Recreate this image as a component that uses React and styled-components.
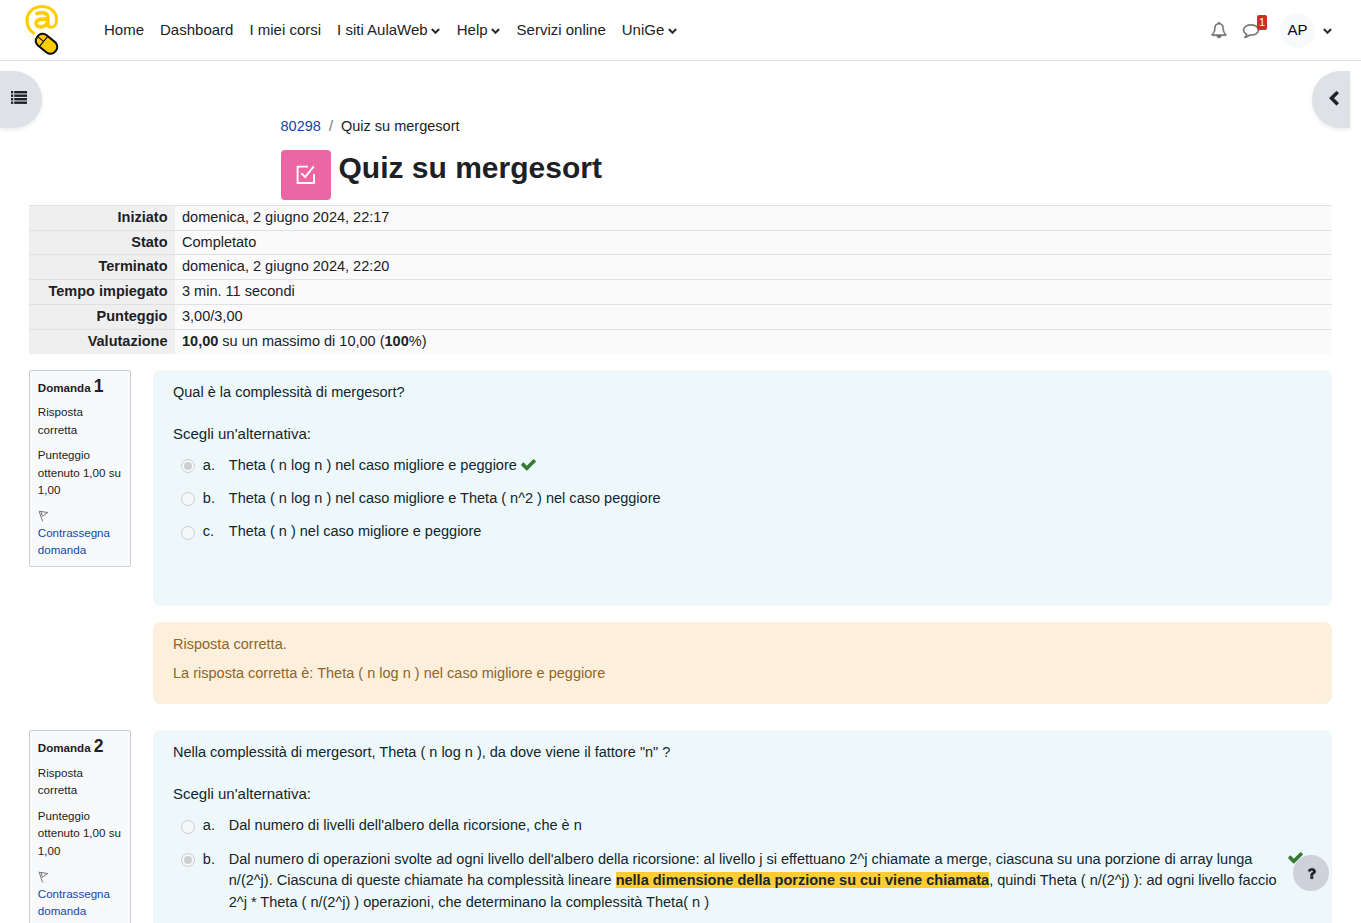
import React from "react";
import styled, { createGlobalStyle, css } from "styled-components";

const Global = createGlobalStyle`
  *, *::before, *::after { box-sizing: border-box; }
  html { overflow: hidden; }
  body {
    margin: 0;
    background: #fff;
    color: #1d2125;
    font-family: "Liberation Sans", Arial, sans-serif;
    font-size: 14.53px;
    line-height: 1.5;
  }
  p { margin: 0; }
`;

const Page = styled.div`
  height: 923px;
  overflow: hidden;
`;

const Link = styled.a`
  color: #0f47ad;
  text-decoration: none;
`;

/* ---------- icons ---------- */

const Glyph = styled.svg`
  display: block;
  flex: none;
  width: ${(p) => p.$size || 16}px;
  height: ${(p) => p.$size || 16}px;
  fill: ${(p) => p.$color || "currentColor"};
  stroke: ${(p) => p.$color || "currentColor"};
  stroke-width: ${(p) => p.$weight || 0};
  overflow: visible;
`;

const PATHS = {
  bell: "M912 1696q0-16-16-16-59 0-101.5-42.5t-42.5-101.5q0-16-16-16t-16 16q0 73 51.5 124.5t124.5 51.5q16 0 16-16zm-666-288h1300q-266-300-266-832 0-51-24-105t-69-103-121.5-80.5-169.5-31.5-169.5 31.5-121.5 80.5-69 103-24 105q0 532-266 832zm1482 0q0 52-38 90t-90 38h-448q0 106-75 181t-181 75-181-75-75-181h-448q-52 0-90-38t-38-90q50-42 91-88t85-119.5 74.5-158.5 50-206 19.5-260q0-152 117-282.5t307-158.5q-8-19-8-39 0-40 28-68t68-28 68 28 28 68q0 20-8 39 190 28 307 158.5t117 282.5q0 139 19.5 260t50 206 74.5 158.5 85 119.5 91 88z",
  comment: "M896 384q-204 0-381.5 69.5t-282 187.5-104.5 255q0 112 71.5 213.5t201.5 175.5l87 50-27 96q-24 91-70 172 152-63 275-171l43-38 57 6q69 8 130 8 204 0 381.5-69.5t282-187.5 104.5-255-104.5-255-282-187.5-381.5-69.5zm896 512q0 174-120 321.5t-326 233-450 85.5q-70 0-145-8-198 175-460 242-49 14-114 22h-5q-15 0-27-10.5t-16-27.5v-1q-3-4-.5-12t2-10 4.5-9.5l6-9 7-8.5 8-9q7-8 31-34.5t34.5-38 31-39.5 32.5-51 27-59 26-76q-157-89-247.5-220t-90.5-281q0-174 120-321.5t326-233 450-85.5 450 85.5 326 233 120 321.5z",
  down: "M1683 808l-742 741q-19 19-45 19t-45-19l-742-741q-19-19-19-45.5t19-45.5l166-165q19-19 45-19t45 19l531 531 531-531q19-19 45-19t45 19l166 165q19 19 19 45.5t-19 45.5z",
  left: "M1427 301l-531 531 531 531q19 19 19 45t-19 45l-166 166q-19 19-45 19t-45-19l-742-742q-19-19-19-45t19-45l742-742q19-19 45-19t45 19l166 166q19 19 19 45t-19 45z",
  check: "M1671 566q0 40-28 68l-724 724-136 136q-28 28-68 28t-68-28l-136-136-362-362q-28-28-28-68t28-68l136-136q28-28 68-28t68 28l294 295 656-657q28-28 68-28t68 28l136 136q28 28 28 68z",
  question: "M1088 1256v240q0 16-12 28t-28 12h-240q-16 0-28-12t-12-28v-240q0-16 12-28t28-12h240q16 0 28 12t12 28zm316-600q0 54-15.5 101t-35 76.5-55 59.5-57.5 43.5-61 35.5q-41 23-68.5 65t-27.5 67q0 17-12 32.5t-28 15.5h-240q-15 0-25.5-18.5t-10.5-37.5v-45q0-83 65-156.5t143-108.5q59-27 84-56t25-76q0-42-46.5-74t-107.5-32q-65 0-108 29-35 25-107 115-13 16-31 16-12 0-25-8l-164-125q-13-10-15.5-25t5.5-28q160-266 464-266 80 0 161 31t146 83 106 127.5 41 158.5z",
};

const Icon = ({ name, size, color, weight, className }) => (
  <Glyph
    className={className}
    viewBox="0 0 1792 1792"
    $size={size}
    $color={color}
    $weight={weight}
    aria-hidden="true"
  >
    <path d={PATHS[name]} />
  </Glyph>
);

const ListGlyph = styled(Glyph)`
  height: 13px;
`;

const ListIcon = () => (
  <ListGlyph viewBox="0 0 16 13" aria-hidden="true">
    {[0, 3.5, 7, 10.5].map((y) => (
      <React.Fragment key={y}>
        <rect x="0" y={y} width="2.2" height="2.4" />
        <rect x="3.2" y={y} width="12.8" height="2.4" />
      </React.Fragment>
    ))}
  </ListGlyph>
);

const LogoSvg = styled.svg`
  display: block;
  width: 50px;
  height: 54px;
`;

const Logo = () => (
  <LogoSvg viewBox="16 3 50 54" fill="none">
    <path
      d="M34.6 33.8C29.9 31 27 26 27 20.2 27 12.6 33.6 6.4 41.8 6.4S56.5 12 56.5 19.2c0 5-2.3 8.1-5.3 8.1-2.2 0-3.4-1-3.4-3.2"
      stroke="#fc0"
      strokeWidth="3"
    />
    <path
      d="M35.6 14.1c1.8-1 4-1.5 6.3-1.5 3.9 0 5.9 1.7 5.9 4.8v7M47.5 19.2h-4.4c-4.7 0-7 1.3-7 3.9 0 2.4 1.6 3.8 4.3 3.8 3.8 0 6.9-2.3 6.9-5.2"
      stroke="#fc0"
      strokeWidth="3.7"
    />
    <g transform="translate(46.5 43.8) rotate(-51)">
      <rect x="-6.7" y="-11.6" width="13.4" height="23.2" rx="6" fill="#fc0" stroke="#0b0b0b" strokeWidth="2" />
      <path d="M-6.6-3.8H6.6M0-11V-3.8" stroke="#0b0b0b" strokeWidth="1.1" />
    </g>
  </LogoSvg>
);

/* ---------- top bar ---------- */

const TopBar = styled.header`
  display: flex;
  align-items: center;
  height: 61px;
  padding: 0 29px 0 16px;
  border-bottom: 1px solid #dee2e6;
  font-size: 15px;
`;

const Nav = styled.nav`
  display: flex;
  align-items: center;
  gap: 16px;
  margin-left: 38px;
  flex: 1;
`;

const NavItem = styled.span`
  display: flex;
  align-items: center;
  white-space: nowrap;
`;

const Caret = styled(Icon)`
  margin: 1px 0.5px 0 3.5px;
`;

const UserTools = styled.div`
  display: flex;
  align-items: center;
`;

const Tool = styled.span`
  position: relative;
  display: flex;
  width: 32px;
  justify-content: center;
  color: #6a6a6a;
`;

const CountBadge = styled.span`
  position: absolute;
  left: 22px;
  top: -7px;
  width: 10px;
  height: 15px;
  border-radius: 2px;
  background: #ca3120;
  color: #fff;
  font-size: 11px;
  line-height: 15px;
  text-align: center;
`;

const Avatar = styled.span`
  display: flex;
  align-items: center;
  justify-content: center;
  width: 35px;
  height: 35px;
  margin: 0 8px 0 13px;
  border-radius: 50%;
  background: #f8f9fa;
  color: #070722;
`;

/* ---------- drawer toggles ---------- */

const DrawerToggles = styled.div`
  display: flex;
  justify-content: space-between;
  height: 57px;
  margin: 10px 11px 0 0;
`;

const DrawerToggle = styled.button`
  display: flex;
  align-items: center;
  width: ${(p) => (p.$side === "left" ? 42 : 38)}px;
  height: 57px;
  border: 0;
  padding: ${(p) => (p.$side === "left" ? "0 0 4px 11px" : "0 0 2px 13.5px")};
  background: #dee2e6;
  color: #1d2125;
  box-shadow: 0 2px 4px rgba(0, 0, 0, 0.08);
  border-radius: ${(p) => (p.$side === "left" ? "0 29px 29px 0" : "29px 0 0 29px")};
`;

/* ---------- page heading ---------- */

const PageHeader = styled.div`
  width: 800px;
  margin: -12px auto 0;
`;

const Breadcrumb = styled.div`
  display: flex;
  gap: 8px;
  line-height: 21.6px;
`;

const Slash = styled.span`
  color: #6a737b;
`;

const TitleRow = styled.div`
  display: flex;
  gap: 8px;
  margin-top: 12.4px;
`;

const ActivityIcon = styled.div`
  display: flex;
  align-items: center;
  justify-content: center;
  width: 50px;
  height: 50px;
  border-radius: 4px;
  background: #eb66a2;
`;

const Title = styled.h1`
  margin: 0;
  font-size: 30px;
  line-height: 36px;
`;

/* ---------- attempt summary ---------- */

const Content = styled.main`
  margin: 4.8px 29px 0;
`;

const Summary = styled.dl`
  margin: 0;
`;

const SummaryRow = styled.div`
  display: flex;
  height: 24.8px;
  border-top: 1px solid #dee2e6;
  line-height: 22px;
`;

const Head = styled.dt`
  width: 146px;
  padding-right: 7.5px;
  background: #efefef;
  font-weight: bold;
  text-align: right;
`;

const Value = styled.dd`
  flex: 1;
  margin: 0;
  padding-left: 7px;
  background: #fafafa;
`;

/* ---------- questions ---------- */

const Question = styled.section`
  display: flex;
  align-items: flex-start;
  justify-content: space-between;
  margin-top: ${(p) => p.$top}px;
`;

const Info = styled.aside`
  width: 102px;
  height: 197px;
  padding: 4px 7.8px 0;
  border: 1px solid #cad0d7;
  border-radius: 2px;
  background: #f8f9fa;
  font-size: 11.6px;
  line-height: 17.4px;
`;

const InfoTitle = styled.h3`
  margin: 0;
  font-size: 11.6px;
  line-height: 22px;
`;

const Ordinal = styled.span`
  font-size: 17.5px;
`;

const InfoText = styled.p`
  margin-top: ${(p) => p.$top || 8.2}px;
`;

const FlagIcon = styled.svg`
  display: block;
  width: 12px;
  height: 12px;
  margin: 11.4px 0 2.2px;
`;

const Body = styled.div`
  width: 1179px;
`;

const box = css`
  border-radius: 8px;
  padding: 11.6px 20px;
`;

const Formulation = styled.div`
  ${box}
  height: ${(p) => p.$height}px;
  background: #eef8fb;
  color: #12262b;
`;

const Prompt = styled.p`
  margin-top: 19.4px;
  margin-bottom: 4.7px;
  font-size: 15px;
  line-height: 22px;
`;

const Answer = styled.div`
  display: flex;
  align-items: flex-start;
  padding: 5.7px 0 5.7px 8px;
`;

const Radio = styled.span`
  display: flex;
  align-items: center;
  justify-content: center;
  flex: none;
  width: 14px;
  height: 14px;
  margin-top: 4.1px;
  border: 1px solid #cdcfd0;
  border-radius: 50%;
  background: #f5f8f9;
  &::after {
    content: "";
    width: 8px;
    height: 8px;
    border-radius: 50%;
    background: ${(p) => (p.$on ? "#cdcfd0" : "transparent")};
  }
`;

const Letter = styled.span`
  flex: none;
  width: 26px;
  margin-left: 7.8px;
`;

const AnswerText = styled.span`
  max-width: 1055px;
`;

const Tick = styled(Icon)`
  margin: 0.4px 0 0 3px;
`;

const Mark = styled.strong`
  background: #fc3;
`;

const Outcome = styled.div`
  ${box}
  height: 82px;
  margin-top: 16px;
  background: #fcefdc;
  color: #8e662e;
`;

const OutcomeText = styled.p`
  margin-bottom: 7.2px;
`;

const HelpButton = styled.button`
  position: fixed;
  right: 32px;
  bottom: 32px;
  display: flex;
  align-items: center;
  justify-content: center;
  width: 36px;
  height: 36px;
  border: 0;
  padding: 0;
  border-radius: 50%;
  background: #ced1d9;
  color: #1d2125;
`;

const NAV = [
  ["Home"], ["Dashboard"], ["I miei corsi"], ["I siti AulaWeb", true],
  ["Help", true], ["Servizi online"], ["UniGe", true],
];

const ROWS = [
  ["Iniziato", "domenica, 2 giugno 2024, 22:17"],
  ["Stato", "Completato"],
  ["Terminato", "domenica, 2 giugno 2024, 22:20"],
  ["Tempo impiegato", "3 min. 11 secondi"],
  ["Punteggio", "3,00/3,00"],
  ["Valutazione", <><b>10,00</b> su un massimo di 10,00 (<b>100</b>%)</>],
];

const QUESTIONS = [
  {
    text: "Qual è la complessità di mergesort?",
    height: 236,
    answers: [
      { text: "Theta ( n log n ) nel caso migliore e peggiore", on: true },
      { text: "Theta ( n log n ) nel caso migliore e Theta ( n^2 ) nel caso peggiore" },
      { text: "Theta ( n ) nel caso migliore e peggiore" },
    ],
    outcome: "La risposta corretta è: Theta ( n log n ) nel caso migliore e peggiore",
  },
  {
    text: 'Nella complessità di mergesort, Theta ( n log n ), da dove viene il fattore "n" ?',
    height: 280,
    answers: [
      { text: "Dal numero di livelli dell'albero della ricorsione, che è n" },
      {
        on: true,
        text: (
          <>
            Dal numero di operazioni svolte ad ogni livello dell'albero della ricorsione: al livello j si effettuano 2^j
            chiamate a merge, ciascuna su una porzione di array lunga n/(2^j). Ciascuna di queste chiamate ha
            complessità lineare <Mark>nella dimensione della porzione su cui viene chiamata</Mark>, quindi Theta (
            n/(2^j) ): ad ogni livello faccio 2^j * Theta ( n/(2^j) ) operazioni, che determinano la complessità Theta( n )
          </>
        ),
      },
    ],
  },
];

const QuestionBlock = ({ q, n }) => (
  <Question $top={n === 1 ? 16.4 : 26.3}>
    <Info>
      <InfoTitle>Domanda <Ordinal>{n}</Ordinal></InfoTitle>
      <InfoText $top={n === 1 ? 4.3 : 4.8}>Risposta corretta</InfoText>
      <InfoText>Punteggio ottenuto 1,00 su 1,00</InfoText>
      <FlagIcon viewBox="0 0 12 12" fill="none" stroke="#777" strokeWidth="1">
        <path d="M1 .8 4.6 11.5M1.6 1.3 9.8 2.5 4.3 6.3M3 1.3 4.3 6.3" />
      </FlagIcon>
      <Link>Contrassegna domanda</Link>
    </Info>
    <Body>
      <Formulation $height={q.height}>
        <p>{q.text}</p>
        <Prompt>Scegli un'alternativa:</Prompt>
        {q.answers.map((a, i) => (
          <Answer key={i}>
            <Radio $on={a.on} />
            <Letter>{"abc"[i]}.</Letter>
            <AnswerText>{a.text}</AnswerText>
            {a.on && <Tick name="check" size={17} color="#357a32" />}
          </Answer>
        ))}
      </Formulation>
      {q.outcome && (
        <Outcome>
          <OutcomeText>Risposta corretta.</OutcomeText>
          <OutcomeText>{q.outcome}</OutcomeText>
        </Outcome>
      )}
    </Body>
  </Question>
);

export default function App() {
  return (
    <Page>
      <Global />
      <TopBar>
        <Logo />
        <Nav>
          {NAV.map(([label, menu]) => (
            <NavItem key={label}>
              {label}
              {menu && <Caret name="down" size={9} weight={60} />}
            </NavItem>
          ))}
        </Nav>
        <UserTools>
          <Tool><Icon name="bell" weight={50} /></Tool>
          <Tool><Icon name="comment" weight={50} /><CountBadge>1</CountBadge></Tool>
          <Avatar>AP</Avatar>
          <Icon name="down" size={9} weight={60} />
        </UserTools>
      </TopBar>
      <DrawerToggles>
        <DrawerToggle $side="left"><ListIcon /></DrawerToggle>
        <DrawerToggle $side="right"><Icon name="left" size={15.5} weight={60} /></DrawerToggle>
      </DrawerToggles>
      <PageHeader>
        <Breadcrumb>
          <Link>80298</Link>
          <Slash>/</Slash>
          <span>Quiz su mergesort</span>
        </Breadcrumb>
        <TitleRow>
          <ActivityIcon>
            <svg width="20" height="20" viewBox="0 0 20 20" fill="none" stroke="#fff" strokeWidth="1.9">
              <path d="M12 1.6H1.6V18H18V9" />
              <path d="M5.3 8.3 9.1 12 17.8 1.3" />
            </svg>
          </ActivityIcon>
          <Title>Quiz su mergesort</Title>
        </TitleRow>
      </PageHeader>
      <Content>
        <Summary>
          {ROWS.map(([k, v]) => (
            <SummaryRow key={k}>
              <Head>{k}</Head>
              <Value>{v}</Value>
            </SummaryRow>
          ))}
        </Summary>
        {QUESTIONS.map((q, i) => <QuestionBlock key={i} q={q} n={i + 1} />)}
      </Content>
      <HelpButton><Icon name="question" size={15} weight={40} /></HelpButton>
    </Page>
  );
}
